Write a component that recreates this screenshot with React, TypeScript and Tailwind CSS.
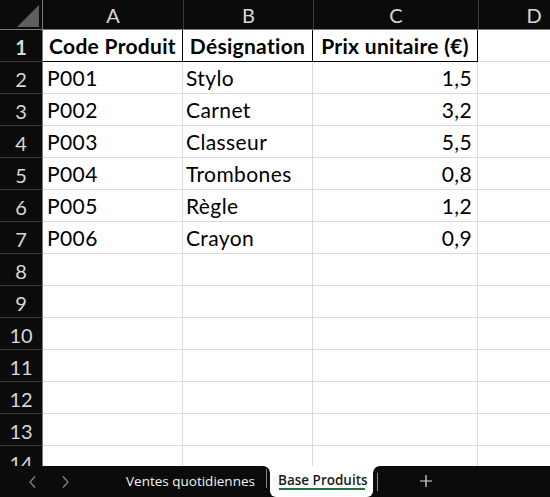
import React from "react";

const rows: [string, string, string][] = [
  ["P001", "Stylo", "1,5"],
  ["P002", "Carnet", "3,2"],
  ["P003", "Classeur", "5,5"],
  ["P004", "Trombones", "0,8"],
  ["P005", "Règle", "1,2"],
  ["P006", "Crayon", "0,9"],
];

const cellFont = { fontFamily: "Lato, 'Liberation Sans', sans-serif" } as const;

function RowHeader({ n }: { n: number }) {
  return (
    <div className="w-[43px] h-[32px] shrink-0 bg-[#0b0b0b] border-r border-r-[#7a7a7a] border-b border-b-[#3a3a3a] flex items-center justify-center text-[20px] text-[#d8d8d8] leading-none pt-[2px] tracking-normal">
      {n}
    </div>
  );
}

export default function App() {
  const empties = [8, 9, 10, 11, 12, 13, 14];
  return (
    <div className="w-[550px] h-[497px] bg-white overflow-hidden relative" style={cellFont}>
      <div className="h-[466px] overflow-hidden">
        {/* column header */}
        <div className="flex h-[30px] bg-[#0b0b0b] border-b border-b-[#7a7a7a] text-[20px] text-[#d8d8d8]">
          <div className="w-[43px] shrink-0 border-r border-r-[#7a7a7a] relative">
            <svg width="43" height="29" className="absolute left-0 top-0">
              <polygon points="17,27 39,27 39,5" fill="#5e5e5e" />
            </svg>
          </div>
          <div className="w-[141px] shrink-0 border-r border-r-[#3a3a3a] flex items-center justify-center">A</div>
          <div className="w-[130px] shrink-0 border-r border-r-[#3a3a3a] flex items-center justify-center">B</div>
          <div className="w-[165px] shrink-0 border-r border-r-[#3a3a3a] flex items-center justify-center">C</div>
          <div className="w-[110px] shrink-0 flex items-center justify-center">D</div>
        </div>
        {/* row 1 */}
        <div className="flex h-[32px] text-[21px] text-black font-bold tracking-[0.3px]">
          <RowHeader n={1} />
          <div className="w-[140px] shrink-0 border-r border-b border-black flex items-center justify-center pt-[1px] whitespace-nowrap">Code Produit</div>
          <div className="w-[130px] shrink-0 border-r border-b border-black flex items-center justify-center pt-[1px] whitespace-nowrap">Désignation</div>
          <div className="w-[165px] shrink-0 border-r border-b border-black flex items-center justify-center pt-[1px] whitespace-nowrap">Prix unitaire (€)</div>
          <div className="w-[110px] shrink-0 border-b border-[#dadada]"></div>
        </div>
        {rows.map((r, i) => (
          <div key={i} className="flex h-[32px] text-[21px] text-black tracking-[0.4px]">
            <RowHeader n={i + 2} />
            <div className="w-[140px] shrink-0 border-r border-b border-[#dadada] flex items-center pl-[4px] pt-[1px]">{r[0]}</div>
            <div className="w-[130px] shrink-0 border-r border-b border-[#dadada] flex items-center pl-[3px] pt-[1px]">{r[1]}</div>
            <div className="w-[165px] shrink-0 border-r border-b border-[#dadada] flex items-center justify-end pr-[5px] pt-[1px]">{r[2]}</div>
            <div className="w-[110px] shrink-0 border-b border-[#dadada]"></div>
          </div>
        ))}
        {empties.map((n) => (
          <div key={n} className="flex h-[32px] text-[20px]">
            <RowHeader n={n} />
            <div className="w-[140px] shrink-0 border-r border-b border-[#dadada]"></div>
            <div className="w-[130px] shrink-0 border-r border-b border-[#dadada]"></div>
            <div className="w-[165px] shrink-0 border-r border-b border-[#dadada]"></div>
            <div className="w-[110px] shrink-0 border-b border-[#dadada]"></div>
          </div>
        ))}
      </div>
      {/* tab bar */}
      <div className="flex h-[31px] bg-white" style={{ fontFamily: "'Open Sans', 'Noto Sans', sans-serif" }}>
        <div className="w-[270px] shrink-0 bg-[#0b0b0b] rounded-tr-[7px] flex items-center relative">
          <svg width="10" height="14" viewBox="0 0 10 14" className="absolute left-[28px] top-[9px]">
            <polyline points="7,1.5 2,7 7,12.5" fill="none" stroke="#8a8a8a" strokeWidth="1.2" />
          </svg>
          <svg width="10" height="14" viewBox="0 0 10 14" className="absolute left-[60px] top-[9px]">
            <polyline points="3,1.5 8,7 3,12.5" fill="none" stroke="#8a8a8a" strokeWidth="1.2" />
          </svg>
          <span className="absolute left-[126px] top-[5px] text-[13.5px] text-[#f2f2f2] whitespace-nowrap">Ventes quotidiennes</span>
          <div className="absolute left-[266px] top-[3px] w-px h-[19px] bg-[#8a8a8a]"></div>
        </div>
        <div className="w-[103px] shrink-0 bg-[#0b0b0b]">
          <div className="h-full bg-white rounded-b-[6px] relative">
            <span className="absolute left-[8px] top-[4px] text-[13.5px] font-semibold text-[#1a1a1a] whitespace-nowrap">Base Produits</span>
            <div className="absolute left-[9px] top-[22px] w-[86px] h-[2px] bg-[#1e7145]"></div>
          </div>
        </div>
        <div className="flex-1 bg-[#0b0b0b] rounded-tl-[7px] relative">
          <div className="absolute left-[4px] top-[7px] w-px h-[18px] bg-[#8a8a8a]"></div>
          <svg width="14" height="14" viewBox="0 0 14 14" className="absolute left-[46px] top-[8px]">
            <path d="M7 1 V13 M1 7 H13" stroke="#e0e0e0" strokeWidth="1.2" />
          </svg>
        </div>
      </div>
    </div>
  );
}
